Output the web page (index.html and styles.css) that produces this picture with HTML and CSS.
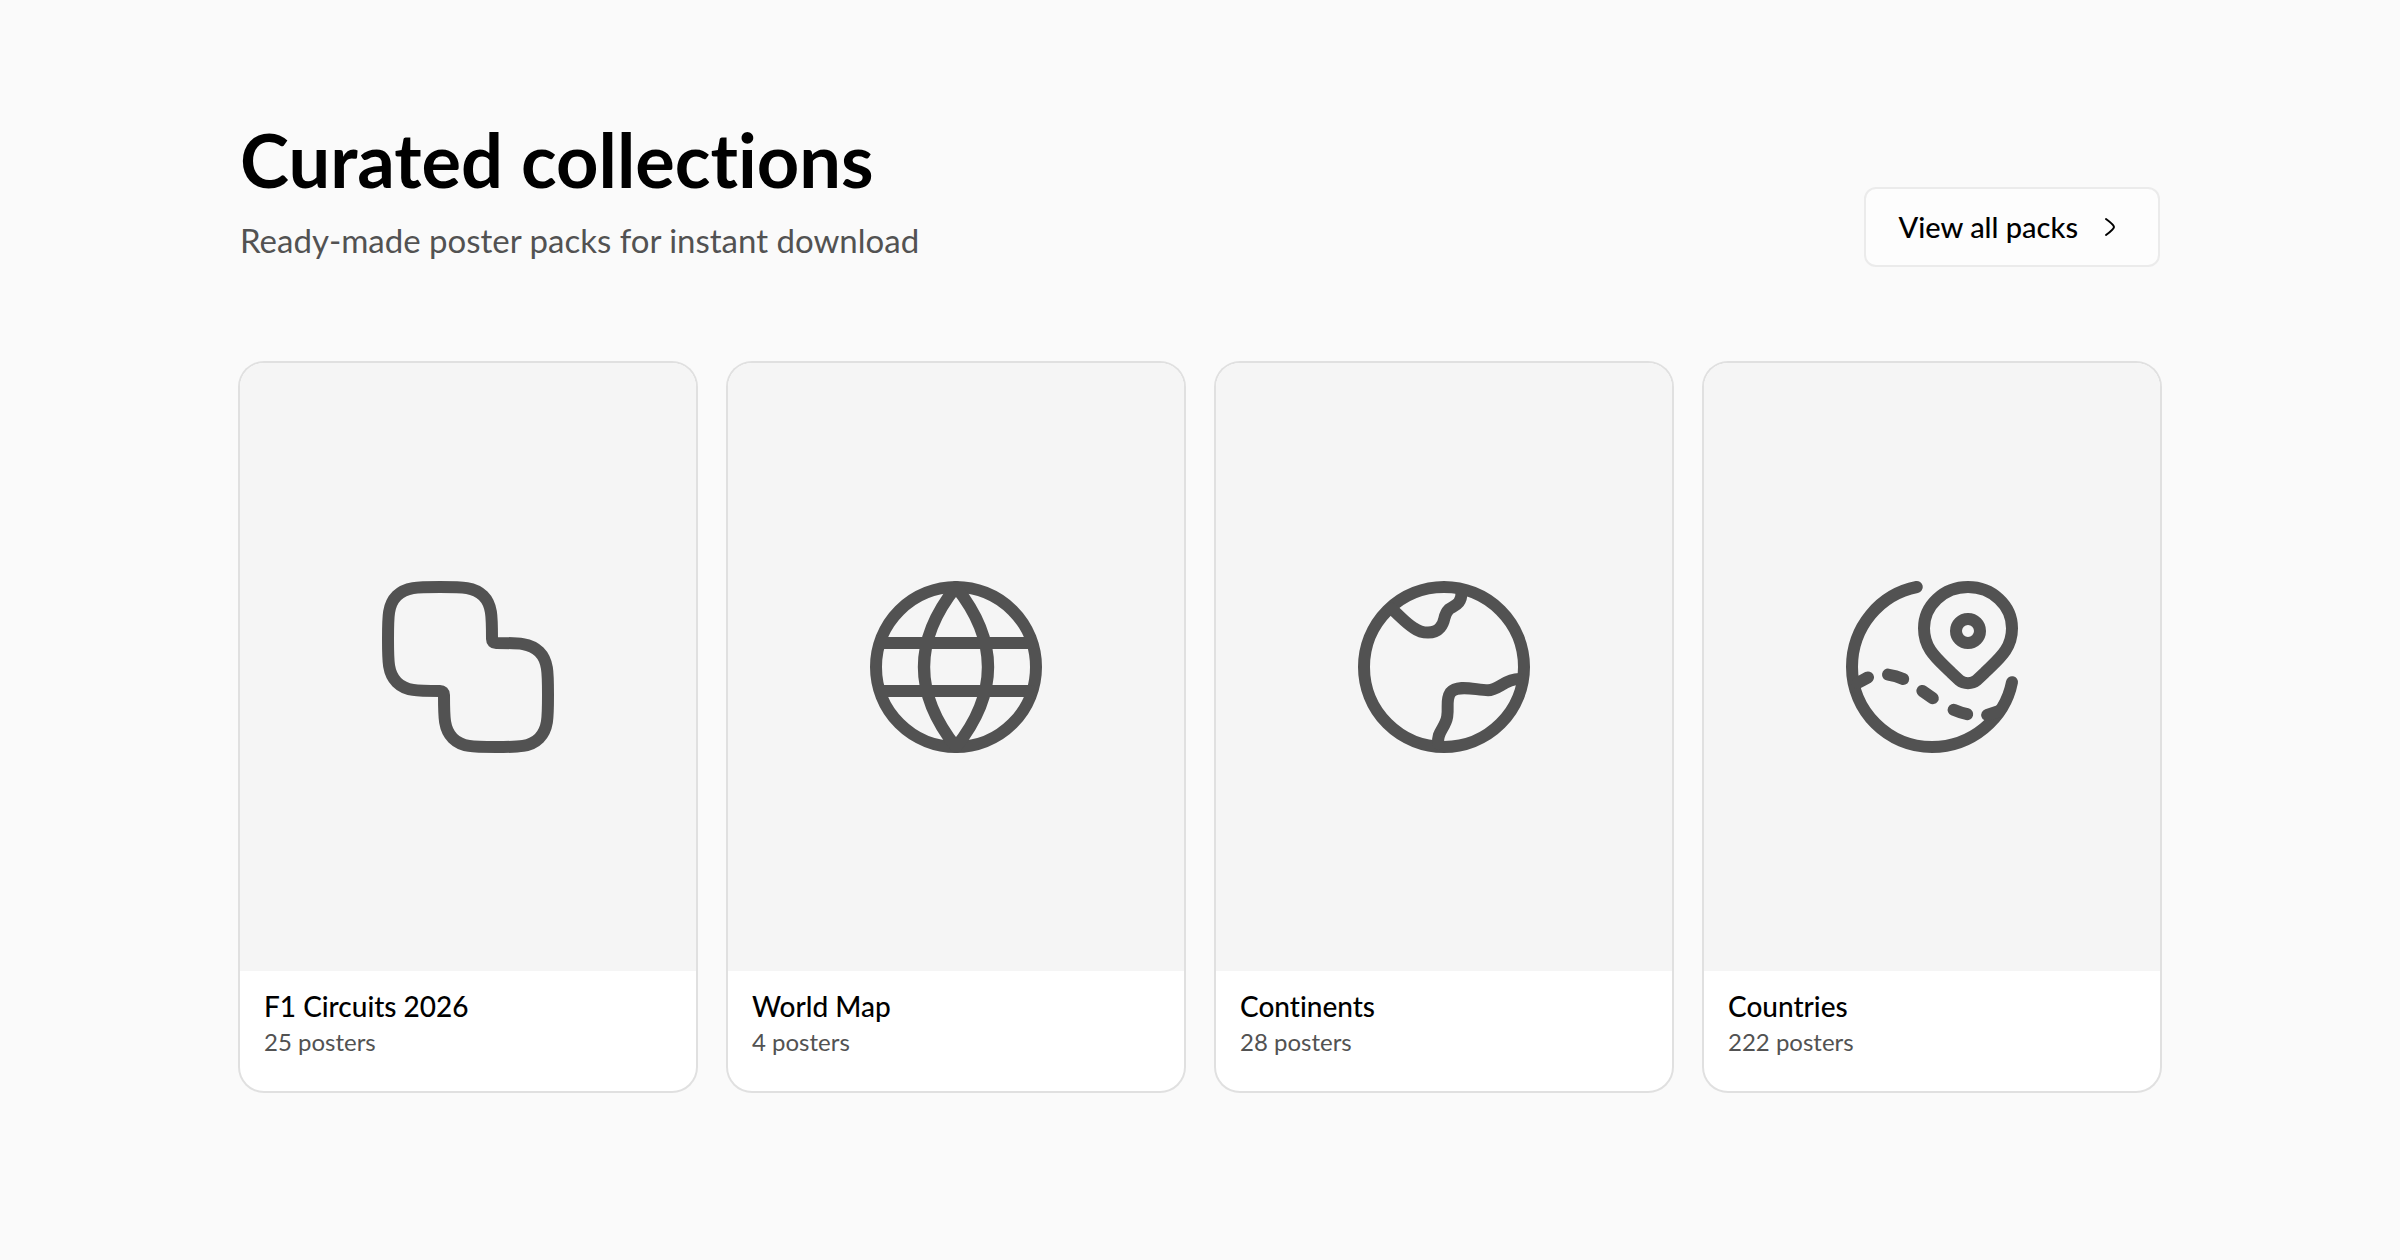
FILE: index.html
```html
<!DOCTYPE html>
<html lang="en">
<head>
  <meta charset="UTF-8" />
  <meta name="viewport" content="width=device-width, initial-scale=1" />
  <title>Curated collections</title>
  <link rel="stylesheet" href="styles.css">
</head>
<body>
  <section class="collections">
    <header class="collections-header">
      <div class="collections-intro">
        <h2>Curated collections</h2>
        <p>Ready-made poster packs for instant download</p>
      </div>
      <a class="view-all" href="/packs">
        View all packs
        <svg viewBox="0 0 24 24" aria-hidden="true">
          <path d="M9 6C9 6 15 10.4 15 12C15 13.6 9 18 9 18" />
        </svg>
      </a>
    </header>

    <div class="packs">
      <a class="pack" href="/packs/f1-circuits">
        <div class="pack-cover">
          <svg viewBox="0 0 24 24" aria-hidden="true">
            <path d="M15 8.5C15 5.6 15 4.2 13.9 3.1C12.8 2 11.4 2 8.5 2C5.6 2 4.2 2 3.1 3.1C2 4.2 2 5.6 2 8.5C2 11.4 2 12.8 3.1 13.9C4.2 15 5.6 15 8.5 15C8.8 15 9 15.2 9 15.5C9 18.4 9 19.8 10.1 20.9C11.2 22 12.6 22 15.5 22C18.4 22 19.8 22 20.9 20.9C22 19.8 22 18.4 22 15.5C22 12.6 22 11.2 20.9 10.1C19.8 9 18.4 9 15.5 9C15.2 9 15 8.8 15 8.5Z" />
          </svg>
        </div>
        <div class="pack-info">
          <h3>F1 Circuits 2026</h3>
          <p>25 posters</p>
        </div>
      </a>

      <a class="pack" href="/packs/world-map">
        <div class="pack-cover">
          <svg viewBox="0 0 24 24" aria-hidden="true">
            <circle cx="12" cy="12" r="10" />
            <path d="M12 2C6.667 8.667 6.667 15.333 12 22C17.333 15.333 17.333 8.667 12 2Z" />
            <path d="M2.6 9H21.4M2.6 15H21.4" />
          </svg>
        </div>
        <div class="pack-info">
          <h3>World Map</h3>
          <p>4 posters</p>
        </div>
      </a>

      <a class="pack" href="/packs/continents">
        <div class="pack-cover">
          <svg viewBox="0 0 24 24" aria-hidden="true">
            <circle cx="12" cy="12" r="10" />
            <path d="M5.4 4.7C6.5 5.6 7.2 6.5 8.2 7.1C9.3 7.9 10.8 7.9 11.5 7.1C12.3 6.2 11.8 5.6 12.6 4.8C13.2 4.3 14.2 4.3 14.2 2.6" />
            <path d="M11.3 21.6C11 20.2 12.2 19.6 12.4 18.2C12.6 16.9 12.2 16.1 12.8 15.2C13.7 14.1 16 14.9 17.5 14.9C18.8 14.9 19.6 13.5 21.4 13.5" />
          </svg>
        </div>
        <div class="pack-info">
          <h3>Continents</h3>
          <p>28 posters</p>
        </div>
      </a>

      <a class="pack" href="/packs/countries">
        <div class="pack-cover">
          <svg viewBox="0 0 24 24" aria-hidden="true">
            <path d="M10.1 2C5.5 2.9 2 7 2 12C2 17.5 6.5 22 12 22C16.9 22 21.1 18.5 22 13.9" />
            <path d="M16.5 2C19.54 2 22 4.3 22 7.15C22 9.8 20.3 11 18.6 12.7L17.6 13.65C17 14.15 16 14.15 15.4 13.65L14.4 12.7C12.7 11 11 9.8 11 7.15C11 4.3 13.46 2 16.5 2Z" />
            <circle cx="16.5" cy="7.5" r="1.5" />
            <path d="M2.7 14L4 13.3M6.5 12.95Q7.5 13.1 8.4 13.5M10.8 15L12.1 15.9M14.7 17.35Q15.5 17.7 16.4 17.9M18.9 18L20.4 17.5" />
          </svg>
        </div>
        <div class="pack-info">
          <h3>Countries</h3>
          <p>222 posters</p>
        </div>
      </a>
    </div>
  </section>
</body>
</html>
```

FILE: styles.css
```css
/* RESET & BASE */
* { box-sizing: border-box; margin: 0; padding: 0; }
body {
  font-family: Lato, "Open Sans", sans-serif;
  font-variant-ligatures: none;
  background: #fafafa;
  color: #000;
}
a { color: inherit; text-decoration: none; }
svg {
  display: block;
  fill: none;
  stroke: currentColor;
  stroke-width: 1.5;
  stroke-linecap: round;
  stroke-linejoin: round;
}

.collections {
  width: 80%;
  max-width: 1920px;
  margin: 0 auto;
  padding: 120px 0;
}

/* HEADER */
.collections-header {
  display: flex;
  justify-content: space-between;
  align-items: flex-end;
  gap: 32px;
  margin-bottom: 96px;
}
.collections-intro h2 {
  font-size: 74px;
  font-weight: 700;
  line-height: 80px;
  margin-bottom: 17px;
}
.collections-intro p {
  font-size: 33px;
  line-height: 46px;
  padding-bottom: 4px;
  color: #525252;
}
.view-all {
  display: flex;
  align-items: center;
  gap: 16px;
  flex-shrink: 0;
  padding: 20px 32px;
  border: 2px solid #ebebeb;
  border-radius: 12px;
  background: #fdfdfd;
  font-size: 29px;
  font-weight: 500;
  line-height: 36px;
}
.view-all svg {
  width: 32px;
  height: 32px;
}

/* PACKS */
.packs {
  display: grid;
  grid-template-columns: repeat(4, 1fr);
  gap: 32px;
}
.pack {
  border-radius: 24px;
  background: #fff;
  box-shadow: 0 0 0 2px #e0e0e0;
  overflow: hidden;
}
.pack-cover {
  display: flex;
  align-items: center;
  justify-content: center;
  aspect-ratio: 3 / 4;
  background: #f5f5f5;
  color: #525252;
}
.pack-cover svg {
  width: 192px;
  height: 192px;
}
.pack-info {
  padding: 15px 24px 33px;
}
.pack-info h3 {
  font-size: 28px;
  font-weight: 500;
  line-height: 40px;
}
.pack-info p {
  font-size: 24px;
  line-height: 32px;
  color: #525252;
}

@media (max-width: 1200px) {
  .packs { grid-template-columns: repeat(2, 1fr); }
  .collections-header { flex-direction: column; align-items: flex-start; }
}
```
